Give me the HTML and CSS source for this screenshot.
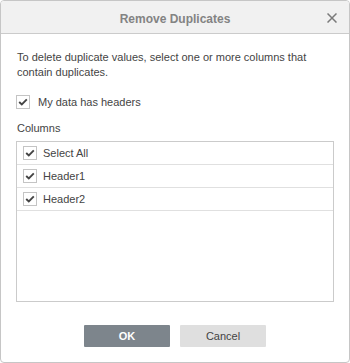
FILE: index.html
```html
<!DOCTYPE html>
<html>
<head>
<meta charset="utf-8">
<link rel="stylesheet" href="styles.css">
</head>
<body>
<div class="dialog">
  <div class="titlebar">
    <span class="title">Remove Duplicates</span>
    <span class="close"><svg width="10" height="10" viewBox="0 0 10 10"><path d="M0.5 0.5L9.5 9.5M9.5 0.5L0.5 9.5" stroke="#7a7a7a" stroke-width="1.5"/></svg></span>
  </div>
  <div class="body">
    <p class="desc">To delete duplicate values, select one or more columns that contain duplicates.</p>
    <label class="check-row headers">
      <span class="box"><svg width="10" height="8" viewBox="0 0 10 8"><path d="M1.2 4L3.8 6.4L8.8 1.4" fill="none" stroke="#444" stroke-width="1.9"/></svg></span>
      <span>My data has headers</span>
    </label>
    <div class="label">Columns</div>
    <div class="list">
      <div class="item"><span class="box"><svg width="10" height="8" viewBox="0 0 10 8"><path d="M1.2 4L3.8 6.4L8.8 1.4" fill="none" stroke="#444" stroke-width="1.9"/></svg></span><span>Select All</span></div>
      <div class="item"><span class="box"><svg width="10" height="8" viewBox="0 0 10 8"><path d="M1.2 4L3.8 6.4L8.8 1.4" fill="none" stroke="#444" stroke-width="1.9"/></svg></span><span>Header1</span></div>
      <div class="item"><span class="box"><svg width="10" height="8" viewBox="0 0 10 8"><path d="M1.2 4L3.8 6.4L8.8 1.4" fill="none" stroke="#444" stroke-width="1.9"/></svg></span><span>Header2</span></div>
    </div>
    <div class="buttons">
      <button class="btn ok">OK</button>
      <button class="btn cancel">Cancel</button>
    </div>
  </div>
</div>
</body>
</html>
```
FILE: styles.css
```css
html, body {
  margin: 0;
  padding: 0;
  background: #fff;
}
body {
  font-family: "Liberation Sans", Arial, sans-serif;
  font-size: 11px;
  color: #444;
}
.dialog {
  width: 348px;
  height: 361px;
  border: 1px solid #c6c6c6;
  border-radius: 4px;
  overflow: hidden;
  display: flex;
  flex-direction: column;
}
.titlebar {
  height: 32px;
  background: #f1f1f1;
  border-bottom: 1px solid #cbcbcb;
  display: flex;
  align-items: center;
  justify-content: center;
  position: relative;
}
.title {
  font-weight: bold;
  font-size: 12px;
  color: #838383;
  margin-top: 3px;
}
.close {
  position: absolute;
  right: 12px;
  top: 12px;
  width: 10px;
  height: 10px;
  display: flex;
}
.body {
  padding: 16px 15px 0 15px;
  flex: 1;
  display: flex;
  flex-direction: column;
}
.desc {
  margin: 0;
  line-height: 15px;
  padding-left: 1px;
}
.check-row {
  display: flex;
  align-items: center;
  margin-top: 15px;
  height: 14px;
}
.box {
  width: 12px;
  height: 12px;
  border: 1px solid #c4c4c4;
  background: #fff;
  display: flex;
  align-items: center;
  justify-content: center;
  flex: none;
}
.check-row .box {
  margin-right: 8px;
}
.label {
  margin-top: 12px;
  height: 15px;
  line-height: 15px;
  padding-left: 1px;
}
.list {
  margin-top: 5px;
  height: 159px;
  border: 1px solid #cbcbcb;
}
.item {
  height: 22px;
  border-bottom: 1px solid #e0e0e0;
  display: flex;
  align-items: center;
  padding-left: 6px;
}
.item .box {
  margin-right: 6px;
}
.buttons {
  display: flex;
  justify-content: center;
  gap: 10px;
  margin-top: 23px;
}
.btn {
  width: 86px;
  height: 22px;
  border: none;
  border-radius: 1px;
  font-family: "Liberation Sans", Arial, sans-serif;
  font-size: 11px;
  padding: 0;
}
.ok {
  background: #7d858c;
  color: #fff;
  font-weight: bold;
}
.cancel {
  background: #dfdfdf;
  color: #444;
}
```
